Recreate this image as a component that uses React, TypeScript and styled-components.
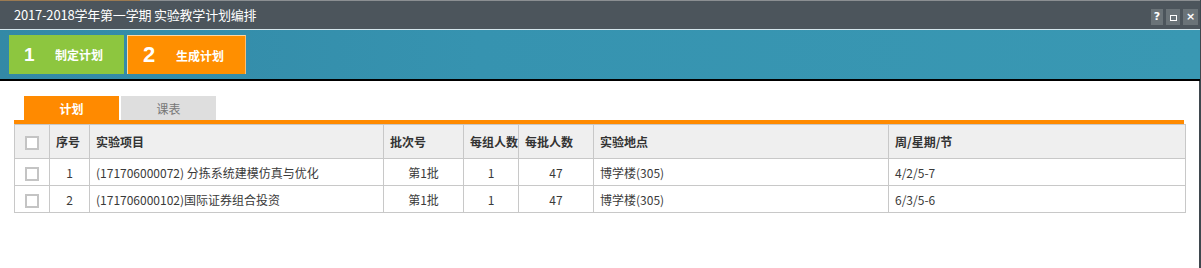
import React from "react";
import styled, { createGlobalStyle } from "styled-components";

const Global = createGlobalStyle`
  html, body { margin: 0; padding: 0; background: #3f474e; }
  body { font-family: "Noto Sans CJK SC", "Noto Sans", sans-serif; }
  * { box-sizing: border-box; }
`;

const Window = styled.div`
  width: 1200px;
  height: 268px;
  background: #ffffff;
  display: flex;
  flex-direction: column;
  overflow: hidden;
`;

const TitleBar = styled.div`
  height: 30px;
  background: #4c555c;
  border-top: 1px solid #8b8f92;
  border-bottom: 1px solid #d5e6ec;
  display: flex;
  align-items: center;
  justify-content: space-between;
  padding: 0 2px 0 14px;
  position: relative;
  &::before {
    content: "";
    position: absolute;
    left: 0;
    top: -1px;
    width: 140px;
    height: 1px;
    background: #9a7a52;
  }
`;

const Title = styled.div`
  color: #ffffff;
  font-size: 13px;
  letter-spacing: -0.2px;
  margin-top: -2px;
`;

const Controls = styled.div`
  display: flex;
  gap: 3px;
  margin-top: 3px;
`;

const CtrlBtn = styled.div<{ $w: number }>`
  width: ${(p) => p.$w}px;
  height: 16px;
  background: #6a7378;
  color: #ffffff;
  font-family: "DejaVu Sans", sans-serif;
  font-size: 11px;
  font-weight: 700;
  display: flex;
  align-items: center;
  justify-content: center;
  line-height: 1;
`;

const SmallSquare = styled.span`
  width: 7px;
  height: 6px;
  border: 1px solid #ffffff;
  margin-top: 2px;
`;

const StepBar = styled.div`
  height: 51px;
  background: linear-gradient(90deg, #3389a6 0%, #3693b0 40%, #3998b3 100%);
  border-bottom: 2px solid #000000;
  display: flex;
  align-items: flex-start;
  gap: 3px;
  padding: 5px 0 0 9px;
`;

const Step = styled.div<{ $bg: string; $w: number; $active?: boolean }>`
  width: ${(p) => p.$w}px;
  height: 39px;
  background: ${(p) => p.$bg};
  display: flex;
  align-items: center;
  color: #ffffff;
  font-weight: 700;
  ${(p) =>
    p.$active
      ? "border-top: 1px solid #ffd7a3; border-left: 1px solid #ffd7a3; border-right: 1px solid #ffbe6e;"
      : ""}
`;

const StepNum = styled.span<{ $size: number; $pl: number; $w: number }>`
  font-family: "Liberation Sans", Arial, sans-serif;
  font-size: ${(p) => p.$size}px;
  font-weight: 700;
  padding-left: ${(p) => p.$pl}px;
  width: ${(p) => p.$w}px;
  flex: none;
`;

const StepLabel = styled.span`
  font-size: 12px;
  font-weight: 700;
`;

const Content = styled.div`
  flex: 1;
  padding: 15px 15px 0 14px;
  border-right: 1px solid #3f474e;
`;

const Tabs = styled.div`
  display: flex;
  gap: 2px;
  padding-left: 10px;
  border-bottom: 4px solid #ff8a00;
`;

const Tab = styled.div<{ $active?: boolean }>`
  width: 95px;
  height: 24px;
  display: flex;
  align-items: center;
  justify-content: center;
  font-size: 12px;
  background: ${(p) => (p.$active ? "#ff8a00" : "#dedede")};
  color: ${(p) => (p.$active ? "#ffffff" : "#777777")};
  font-weight: ${(p) => (p.$active ? 700 : 400)};
  margin-bottom: ${(p) => (p.$active ? "0" : "0")};
`;

const Table = styled.table`
  width: 1171px;
  border-collapse: collapse;
  table-layout: fixed;
  font-size: 12px;
  color: #333333;
`;

const HeadCell = styled.th<{ $align?: string }>`
  height: 34px;
  background: #efefef;
  border: 1px solid #c8c8c8;
  font-weight: 700;
  text-align: ${(p) => p.$align || "left"};
  padding: 0 0 0 6px;
  white-space: nowrap;
  overflow: hidden;
`;

const Cell = styled.td<{ $align?: string }>`
  height: 27px;
  border: 1px solid #c8c8c8;
  text-align: ${(p) => p.$align || "left"};
  padding: ${(p) => (p.$align === "center" ? "0" : "0 0 0 6px")};
  white-space: nowrap;
  color: #3a3a3a;
`;

const CheckBox = styled.span`
  display: inline-block;
  width: 14px;
  height: 14px;
  border: 2px solid #c4c4c4;
  background: #ffffff;
  vertical-align: middle;
`;

const cols = [35, 40, 294, 80, 55, 75, 295, 297];

const rows = [
  {
    no: "1",
    name: "(171706000072) 分拣系统建模仿真与优化",
    batch: "第1批",
    group: "1",
    per: "47",
    place: "博学楼(305)",
    time: "4/2/5-7",
  },
  {
    no: "2",
    name: "(171706000102)国际证券组合投资",
    batch: "第1批",
    group: "1",
    per: "47",
    place: "博学楼(305)",
    time: "6/3/5-6",
  },
];

export default function App() {
  return (
    <>
      <Global />
      <Window>
        <TitleBar>
          <Title>2017-2018学年第一学期 实验教学计划编排</Title>
          <Controls>
            <CtrlBtn $w={12}>?</CtrlBtn>
            <CtrlBtn $w={14}>
              <SmallSquare />
            </CtrlBtn>
            <CtrlBtn $w={15}>×</CtrlBtn>
          </Controls>
        </TitleBar>
        <StepBar>
          <Step $bg="#8dc63f" $w={115}>
            <StepNum $size={19} $pl={15} $w={46}>1</StepNum>
            <StepLabel>制定计划</StepLabel>
          </Step>
          <Step $bg="#ff8f00" $w={119} $active>
            <StepNum $size={22} $pl={15} $w={48}>2</StepNum>
            <StepLabel>生成计划</StepLabel>
          </Step>
        </StepBar>
        <Content>
          <Tabs>
            <Tab $active>计划</Tab>
            <Tab>课表</Tab>
          </Tabs>
          <Table>
            <colgroup>
              {cols.map((w, i) => (
                <col key={i} style={{ width: w }} />
              ))}
            </colgroup>
            <thead>
              <tr>
                <HeadCell $align="center" style={{ padding: 0 }}>
                  <CheckBox />
                </HeadCell>
                <HeadCell>序号</HeadCell>
                <HeadCell>实验项目</HeadCell>
                <HeadCell>批次号</HeadCell>
                <HeadCell>每组人数</HeadCell>
                <HeadCell>每批人数</HeadCell>
                <HeadCell>实验地点</HeadCell>
                <HeadCell>周/星期/节</HeadCell>
              </tr>
            </thead>
            <tbody>
              {rows.map((r) => (
                <tr key={r.no}>
                  <Cell $align="center">
                    <CheckBox />
                  </Cell>
                  <Cell $align="center">{r.no}</Cell>
                  <Cell>{r.name}</Cell>
                  <Cell $align="center">{r.batch}</Cell>
                  <Cell $align="center">{r.group}</Cell>
                  <Cell $align="center">{r.per}</Cell>
                  <Cell>{r.place}</Cell>
                  <Cell>{r.time}</Cell>
                </tr>
              ))}
            </tbody>
          </Table>
        </Content>
      </Window>
    </>
  );
}
